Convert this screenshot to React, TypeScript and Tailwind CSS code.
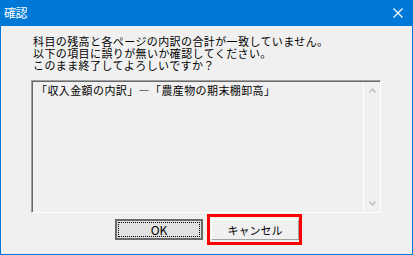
import React from "react";

const font = { fontFamily: '"Noto Sans CJK JP", "Noto Sans", sans-serif' };

export default function App() {
  return (
    <div className="w-[413px] h-[255px] bg-[#0078d7] flex flex-col" style={font}>
      <div className="h-[26px] flex items-center justify-between pl-[4px] pr-[10px] shrink-0">
        <span className="text-white text-[12px] leading-[12px] tracking-[-0.5px]">確認</span>
        <svg width="10" height="10" viewBox="0 0 10 10" className="block">
          <path d="M0.5 0.5 L9.5 9.5 M9.5 0.5 L0.5 9.5" stroke="#ffffff" strokeWidth="1.1" fill="none" />
        </svg>
      </div>
      <div className="mx-[1px] mb-[1px] flex-1 bg-[#f0f0f0] flex flex-col">
        <p className="pl-[32px] pt-[9px] text-[11px] leading-[12px] tracking-[0.4px] text-black">
          科目の残高と各ページの内訳の合計が一致していません。
          <br />
          以下の項目に誤りが無いか確認してください。
          <br />
          このまま終了してよろしいですか？
        </p>
        <div className="ml-[30px] mt-[9px] w-[350px] h-[133px] border-t border-l border-[#a0a0a0] border-r border-b border-r-white border-b-white flex">
          <div className="flex-1 flex border-t border-l border-[#696969]">
            <div className="flex-1 pl-[3px] pt-[2px] text-[11px] leading-[12px] tracking-[0.4px] text-black">
              「収入金額の内訳」―「農産物の期末棚卸高」
            </div>
            <div className="w-[17px] border-l border-white flex flex-col justify-between items-center py-[6px]">
              <svg width="7" height="5" viewBox="0 0 7 5">
                <path d="M0.5 4.5 L3.5 1 L6.5 4.5" stroke="#b8b8b8" strokeWidth="1.2" fill="none" />
              </svg>
              <svg width="7" height="5" viewBox="0 0 7 5">
                <path d="M0.5 0.5 L3.5 4 L6.5 0.5" stroke="#b8b8b8" strokeWidth="1.2" fill="none" />
              </svg>
            </div>
          </div>
        </div>
        <div className="flex justify-center gap-[8px] mt-[6px] pl-[1px]">
          <div className="w-[88px] h-[21px] border-2 border-[#6a6a6a] bg-[#e1e1e1] p-[1px]">
            <div className="w-full h-full border border-dotted border-black flex items-center justify-center text-[12px] leading-[12px] text-black">
              OK
            </div>
          </div>
          <div className="relative">
            <div className="w-[88px] h-[21px] border-t border-l border-white border-r border-b border-r-[#a0a0a0] border-b-[#a0a0a0] bg-[#f0f0f0] flex items-center justify-center text-[11px] leading-[12px] tracking-[0px] text-black">
              キャンセル
            </div>
            <div className="absolute -left-[4px] -top-[5px] w-[95px] h-[31px] border-[3px] border-[#ff0000]" />
          </div>
        </div>
      </div>
    </div>
  );
}
